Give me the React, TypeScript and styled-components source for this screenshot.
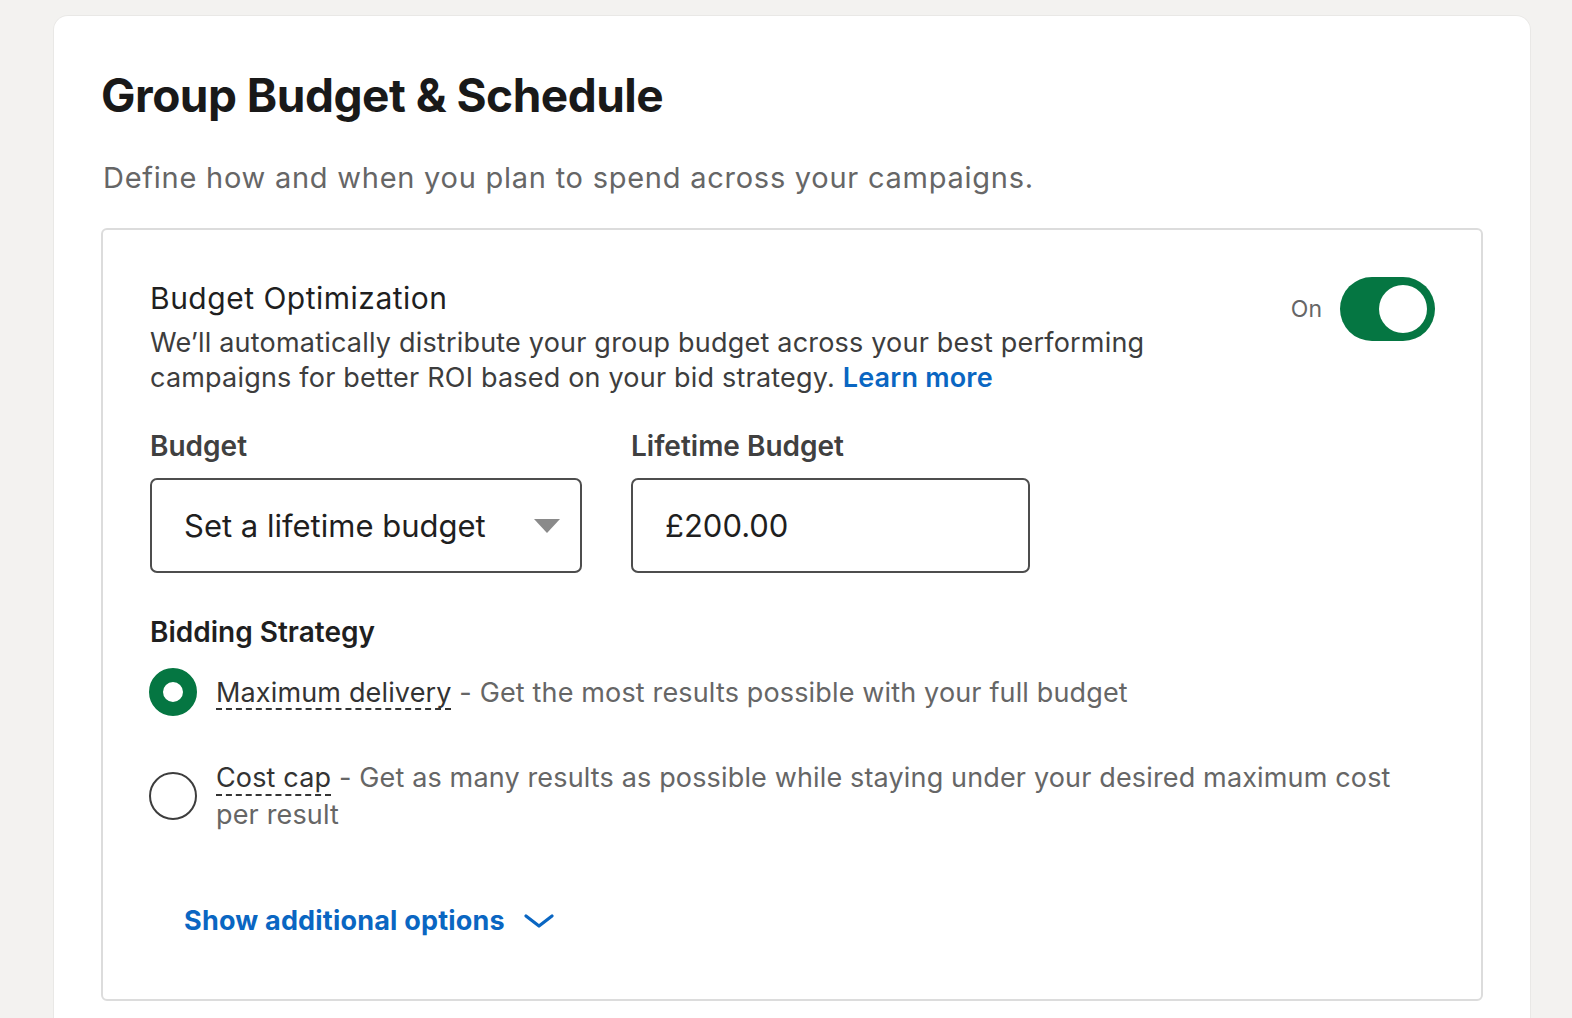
import styled, { createGlobalStyle } from 'styled-components';

const GlobalStyle = createGlobalStyle`
    html, body {
        margin: 0;
        padding: 0;
        background: #f3f2f0;
    }
    body {
        font-family: Inter, "Noto Sans", "Liberation Sans", sans-serif;
        -webkit-font-smoothing: antialiased;
    }
`;

const Page = styled.div`
    padding: 16px 42px 0 54px;
    height: 1018px;
    box-sizing: border-box;
    overflow: hidden;
`;

const Card = styled.section`
    background: #fff;
    border-radius: 14px 14px 0 0;
    box-shadow: 0 0 0 1px rgba(0, 0, 0, 0.04);
    padding: 50px 47px 0 47px;
    min-height: 1100px;
`;

const Title = styled.h1`
    margin: 0;
    font-size: 46px;
    line-height: 58px;
    font-weight: 700;
    color: #191919;
    letter-spacing: -0.5px;
`;

const Subtitle = styled.p`
    margin: 36px 0 0 2px;
    font-size: 29px;
    line-height: 36px;
    letter-spacing: 0.75px;
    color: #666;
`;

const Panel = styled.div`
    margin-top: 32px;
    border: 2px solid #dcdcdc;
    border-radius: 6px;
    padding: 48px 46px 60px 47px;
`;

const PanelHeader = styled.div`
    display: flex;
    justify-content: space-between;
    align-items: flex-start;
`;

const HeaderText = styled.div`
    max-width: 1010px;
`;

const PanelTitle = styled.h2`
    margin: 0;
    font-size: 30px;
    line-height: 40px;
    font-weight: 400;
    letter-spacing: 0.5px;
    color: #1f1f1f;
`;

const PanelBody = styled.p`
    margin: 7px 0 0;
    font-size: 27px;
    line-height: 35px;
    letter-spacing: 0.2px;
    color: #3d3d3d;
`;

const Link = styled.a`
    color: #0a66c2;
    font-weight: 600;
    text-decoration: none;
`;

const ToggleWrap = styled.label`
    display: flex;
    align-items: center;
    gap: 18px;
    font-size: 23px;
    color: #666;
    margin-top: -1px;
`;

const Toggle = styled.span<{ $on: boolean }>`
    position: relative;
    display: block;
    width: 95px;
    height: 64px;
    border-radius: 32px;
    background: ${(p) => (p.$on ? '#057642' : '#8c8c8c')};

    &::after {
        content: '';
        position: absolute;
        top: 8px;
        left: ${(p) => (p.$on ? '39px' : '8px')};
        width: 48px;
        height: 48px;
        border-radius: 50%;
        background: #fff;
    }
`;

const FieldRow = styled.div`
    display: flex;
    gap: 49px;
    margin-top: 34px;
`;

const Field = styled.div<{ $width: number }>`
    display: flex;
    flex-direction: column;
    gap: 15px;
    width: ${(p) => p.$width}px;
`;

const Label = styled.span`
    font-size: 28px;
    line-height: 34px;
    font-weight: 600;
    color: #404040;
`;

const Box = styled.div`
    display: flex;
    align-items: center;
    justify-content: space-between;
    height: 95px;
    box-sizing: border-box;
    border: 2px solid #4d4d4d;
    border-radius: 7px;
    padding: 0 20px 0 32px;
    font-size: 31px;
    color: #1f1f1f;
`;

const Caret = styled.span`
    width: 0;
    height: 0;
    border-left: 13px solid transparent;
    border-right: 13px solid transparent;
    border-top: 14px solid #8a8a8a;
`;

const SectionLabel = styled.h3`
    margin: 42px 0 0;
    font-size: 28px;
    line-height: 34px;
    font-weight: 600;
    color: #1f1f1f;
`;

const Options = styled.div`
    display: flex;
    flex-direction: column;
    gap: 43px;
    margin-top: 19px;
`;

const Option = styled.label`
    display: flex;
    align-items: center;
    gap: 19px;
    margin-left: -1px;
`;

const Radio = styled.span<{ $checked: boolean }>`
    flex: none;
    width: 48px;
    height: 48px;
    box-sizing: border-box;
    border-radius: 50%;
    border: ${(p) => (p.$checked ? '14px solid #057642' : '2px solid #3d3d3d')};
    background: #fff;
`;

const OptionText = styled.span`
    font-size: 27px;
    line-height: 37px;
    letter-spacing: 0.15px;
    color: #666;
    max-width: 1180px;
`;

const Term = styled.span`
    color: #333;
    text-decoration-line: underline;
    text-decoration-style: dashed;
    text-decoration-thickness: 2px;
    text-decoration-color: #333;
    text-underline-offset: 7px;
`;

const MoreButton = styled.button`
    display: flex;
    align-items: center;
    gap: 19px;
    margin: 70px 0 0 34px;
    padding: 0;
    border: none;
    background: none;
    font-family: inherit;
    font-size: 27px;
    line-height: 36px;
    font-weight: 700;
    letter-spacing: 0.2px;
    color: #0a66c2;
`;

const options = [
    { term: 'Maximum delivery', text: 'Get the most results possible with your full budget', checked: true },
    {
        term: 'Cost cap',
        text: 'Get as many results as possible while staying under your desired maximum cost per result',
        checked: false,
    },
];

const App = () => (
    <>
        <GlobalStyle />
        <Page>
            <Card>
                <Title>Group Budget &amp; Schedule</Title>
                <Subtitle>Define how and when you plan to spend across your campaigns.</Subtitle>
                <Panel>
                    <PanelHeader>
                        <HeaderText>
                            <PanelTitle>Budget Optimization</PanelTitle>
                            <PanelBody>
                                We’ll automatically distribute your group budget across your best performing
                                campaigns for better ROI based on your bid strategy. <Link href="#">Learn more</Link>
                            </PanelBody>
                        </HeaderText>
                        <ToggleWrap>
                            On
                            <Toggle $on />
                        </ToggleWrap>
                    </PanelHeader>

                    <FieldRow>
                        <Field $width={432}>
                            <Label>Budget</Label>
                            <Box>
                                Set a lifetime budget
                                <Caret />
                            </Box>
                        </Field>
                        <Field $width={399}>
                            <Label>Lifetime Budget</Label>
                            <Box>£200.00</Box>
                        </Field>
                    </FieldRow>

                    <SectionLabel>Bidding Strategy</SectionLabel>
                    <Options>
                        {options.map((o) => (
                            <Option key={o.term}>
                                <Radio $checked={o.checked} />
                                <OptionText>
                                    <Term>{o.term}</Term> - {o.text}
                                </OptionText>
                            </Option>
                        ))}
                    </Options>

                    <MoreButton>
                        Show additional options
                        <svg width="30" height="16" viewBox="0 0 30 16" fill="none">
                            <path d="M2 3l13 10L28 3" stroke="#0a66c2" strokeWidth="3.2" strokeLinecap="round" strokeLinejoin="round" />
                        </svg>
                    </MoreButton>
                </Panel>
            </Card>
        </Page>
    </>
);

export default App;
